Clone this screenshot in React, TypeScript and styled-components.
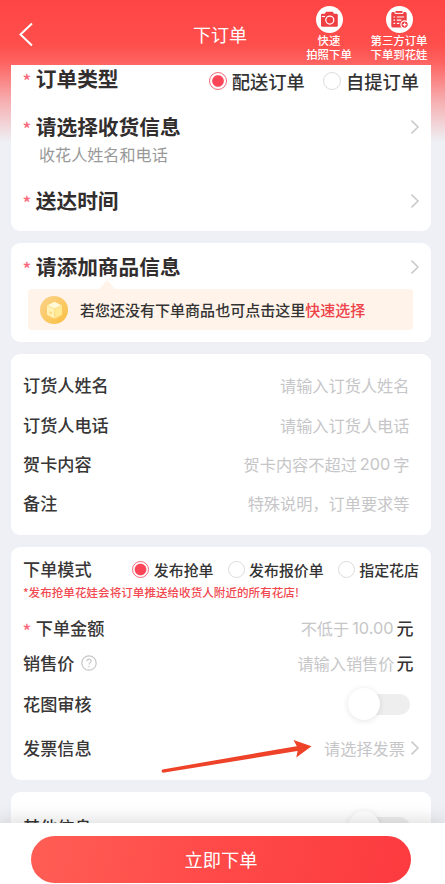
import React from "react";
import styled, { createGlobalStyle } from "styled-components";

const GlobalStyle = createGlobalStyle`
  * { box-sizing: border-box; }
  body {
    margin: 0;
    background: #eef0f5;
    font-family: "Noto Sans CJK SC", sans-serif;
    font-weight: 500;
    color: #333;
  }
`;

const Screen = styled.div`
  position: relative;
  width: 445px;
  height: 884px;
  display: flex;
  flex-direction: column;
  overflow: hidden;
  background: linear-gradient(180deg, #ff4545 0, #fe4f4c 45px, #fd6260 62px, #f6b0b2 102px, #eef0f5 142px);
`;

const Header = styled.header`
  height: 65px;
  flex: none;
  display: grid;
  grid-template-columns: 193px 109px 54px 86px;
  color: #fff;
`;

const BackButton = styled.button`
  border: 0;
  background: none;
  padding: 22px 0 0 18px;
  display: flex;
  align-items: flex-start;
`;

const Title = styled.h1`
  margin: 0;
  padding-top: 21px;
  font-size: 18px;
  font-weight: 400;
  line-height: 26px;
`;

const HeaderAction = styled.div`
  display: flex;
  flex-direction: column;
  align-items: center;
  padding-top: 6px;
  font-size: 11.4px;
  line-height: 14px;
  text-align: center;
  white-space: nowrap;
  svg { flex: none; }
`;

const Content = styled.main`
  flex: 1;
  min-height: 0;
  overflow: hidden;
  padding: 0 14px 0 11px;
  display: flex;
  flex-direction: column;
  gap: 12px;
`;

const Card = styled.section<{ $h: number; $top?: number; $flat?: boolean }>`
  height: ${(p) => p.$h}px;
  flex: none;
  background: #fff;
  border-radius: ${(p) => (p.$flat ? "0 0 9px 9px" : "9px")};
  padding: ${(p) => p.$top ?? 0}px 12px 0;
`;

const Row = styled.div<{ $h: number; $end?: number }>`
  height: ${(p) => p.$h}px;
  display: flex;
  align-items: center;
  justify-content: space-between;
  padding-right: ${(p) => p.$end ?? 0}px;
  white-space: nowrap;
`;

const Label = styled.div<{ $big?: boolean }>`
  display: flex;
  align-items: center;
  font-size: ${(p) => (p.$big ? 20.7 : 17.15)}px;
  font-weight: ${(p) => (p.$big ? 700 : 500)};
  line-height: 26px;
  color: ${(p) => (p.$big ? "#322e2e" : "#383636")};
  padding-bottom: ${(p) => (p.$big ? 2 : 0)}px;
`;

const Star = styled.span`
  width: 13.4px;
  margin-left: -0.6px;
  flex: none;
  font-weight: 500;
  font-size: 18px;
  line-height: 26px;
  color: #f7687a;
  padding-top: 3px;
  height: 28px;
`;

const Hint = styled.div`
  height: 24px;
  padding-left: 16px;
  font-size: 16.1px;
  font-weight: 400;
  line-height: 26px;
  color: #999;
`;

const Placeholder = styled.div`
  display: flex;
  align-items: center;
  font-size: 16.2px;
  font-weight: 400;
  line-height: 24px;
  color: #c6c6c8;
`;

const Digits = styled.span`
  font-family: Inter, sans-serif;
  font-size: 16.3px;
  margin: 0 3px;
`;

const Unit = styled.span<{ $space: number }>`
  font-size: 17px;
  font-weight: 500;
  color: #333;
  margin-left: ${(p) => p.$space}px;
`;

const Options = styled.div<{ $gap: number; $top: number }>`
  display: flex;
  align-items: center;
  gap: ${(p) => p.$gap}px;
  padding-top: ${(p) => p.$top}px;
`;

const Option = styled.label<{ $size: number; $space: number }>`
  display: flex;
  align-items: center;
  gap: ${(p) => p.$space}px;
  font-size: ${(p) => p.$size}px;
  line-height: 26px;
  color: #333;
`;

const Dot = styled.span<{ $on?: boolean; $d: number }>`
  width: ${(p) => p.$d}px;
  height: ${(p) => p.$d}px;
  flex: none;
  border-radius: 50%;
  border: 1.5px solid ${(p) => (p.$on ? "#f5697a" : "#dcdcde")};
  background: ${(p) => (p.$on ? "radial-gradient(circle, #fb4658 0 5.3px, #fff 6.3px)" : "#fff")};
`;

const Tip = styled.div`
  position: relative;
  width: 385px;
  height: 41px;
  margin: 8px 0 0 5px;
  padding-left: 12px;
  display: flex;
  align-items: center;
  gap: 12px;
  border-radius: 4px;
  background: #fff3ea;
  font-size: 15.02px;
  line-height: 22px;
  white-space: nowrap;
  &::before {
    content: "";
    position: absolute;
    left: 71px;
    top: -9px;
    border: 8px solid transparent;
    border-top: 0;
    border-bottom: 9px solid #fff3ea;
  }
`;

const Quick = styled.span`
  color: #ee4148;
`;

const Notice = styled.div`
  height: 18px;
  font-size: 11.58px;
  line-height: 18px;
  color: #f1494f;
  white-space: nowrap;
`;

const Track = styled.span`
  position: relative;
  width: 58px;
  height: 21px;
  border-radius: 11px;
  background: #eee;
  &::before {
    content: "";
    position: absolute;
    left: -4px;
    top: -6px;
    width: 32px;
    height: 32px;
    border-radius: 50%;
    background: #fff;
    box-shadow: 0 1px 6px rgba(0, 0, 0, 0.11);
  }
`;

const Footer = styled.footer`
  position: relative;
  height: 61px;
  flex: none;
  padding: 13px 34px 0 31px;
  background: #fff;
  box-shadow: 0 -2px 18px rgba(0, 0, 0, 0.15);
`;

const Submit = styled.button`
  display: block;
  width: 100%;
  height: 47px;
  border: 0;
  border-radius: 24px;
  background: linear-gradient(100deg, #ff5e55, #ff4b49 45%, #fc3a3f);
  color: #fff;
  font: 400 18.3px/47px "Noto Sans CJK SC", sans-serif;
  padding: 0;
`;

const ArrowOverlay = styled.svg`
  position: absolute;
  left: 155px;
  top: 735px;
  pointer-events: none;
`;

const ChevronIcon = styled.svg`
  flex: none;
  margin-right: -1px;
`;

const HelpIcon = styled.svg`
  margin-left: 7px;
`;

const InvoiceText = styled.span`
  margin-right: 5px;
`;

const Gap = styled.div<{ $h: number }>`
  height: ${(p) => p.$h}px;
`;

const Chevron = () => (
  <ChevronIcon width="10" height="16" viewBox="0 0 10 16" fill="none" stroke="#c9c9cb" strokeWidth="1.5">
    <path d="M1.5 1.6 8 8l-6.5 6.4" />
  </ChevronIcon>
);

const Camera = () => (
  <svg width="27" height="27" viewBox="0 0 27 27">
    <circle cx="13.5" cy="13.5" r="13.5" fill="#fff" />
    <path d="M6.2 7.8h2.6l1.3-2h6.6l1.3 2h2.6q1.2 0 1.2 1.2v10.6q0 1.2-1.2 1.2H6.2Q5 20.8 5 19.6V9q0-1.2 1.2-1.2Z" fill="#ee3f43" />
    <circle cx="13.8" cy="14.1" r="4" fill="none" stroke="#fff" strokeWidth="1.2" />
    <path d="M5.8 10.5H9" stroke="#fff" strokeWidth="1.1" />
  </svg>
);

const Clipboard = () => (
  <svg width="27" height="27" viewBox="0 0 27 27">
    <circle cx="13.5" cy="13.5" r="13.5" fill="#fff" />
    <rect x="5.3" y="6" width="15.4" height="15.5" rx="1.5" fill="#ee3f43" />
    <path d="M9 5v2.4h8V5" fill="#ee3f43" stroke="#fff" />
    <path d="M7.5 11h1.6M10.800 11h7.400M7.500 14.200h1.600M10.800 14.200h4.500M7.500 17.400h1.600M10.800 17.400h2.500" stroke="#fff" strokeWidth="1.2" />
    <circle cx="18.6" cy="18.6" r="3.7" fill="#ee3f43" stroke="#fff" strokeWidth="1.2" />
    <path d="M16.8 18.6h3.6M18.600 16.800v3.600" stroke="#fff" strokeWidth="1.2" />
  </svg>
);

const BoxIcon = () => (
  <svg width="28" height="28" viewBox="0 0 28 28">
    <defs>
      <linearGradient id="gold" x1="0" y1="0" x2="1" y2="1">
        <stop offset="0" stopColor="#fbd28a" />
        <stop offset=".6" stopColor="#fbc861" />
        <stop offset="1" stopColor="#f9bd3c" />
      </linearGradient>
    </defs>
    <circle cx="14" cy="14" r="14" fill="url(#gold)" />
    <path d="m14.5 5.8 7.5 3.6-7.5 3.5L7 9.4Z" fill="#fff9d6" />
    <path d="m7 9.4 7.5 3.5v9.8L7 18.8Z" fill="#fff2b4" />
    <path d="m22 9.4-7.5 3.5v9.8l7.5-3.9Z" fill="#ffe995" />
    <path d="m7 9.4 7.5 3.5L22 9.4M14.5 12.9v9.8" fill="none" stroke="#fbd77a" strokeWidth=".6" />
    <path d="m9.6 15.3 2 1v2l-2-1Z" fill="#fbd272" />
  </svg>
);

const Help = () => (
  <HelpIcon width="16" height="16" viewBox="0 0 16 16" fill="none" stroke="#c8c8ca" strokeWidth="1.2">
    <circle cx="8" cy="8" r="7.2" />
    <path d="M5.8 6.3C5.8 3.4 10.4 3.6 10.2 6.3 10 7.7 8 7.7 8 9.6M8 11v1.3" />
  </HelpIcon>
);

const BigRow = ({ text }: { text: string }) => (
  <Row $h={28}>
    <Label $big><Star>*</Star>{text}</Label>
    <Chevron />
  </Row>
);

const Field = ({ label, h, children }: { label: string; h: number; children: React.ReactNode }) => (
  <Row $h={h} $end={9.5}>
    <Label>{label}</Label>
    <Placeholder>{children}</Placeholder>
  </Row>
);

export default function App() {
  return (
    <Screen>
      <GlobalStyle />
      <Header>
        <BackButton aria-label="返回">
          <svg width="16" height="25" viewBox="0 0 16 25" fill="none" stroke="#fff" strokeWidth="2">
            <path d="M14 1.5 2.5 12.5 14 23.5" />
          </svg>
        </BackButton>
        <Title>下订单</Title>
        <HeaderAction><Camera /><div>快速<br />拍照下单</div></HeaderAction>
        <HeaderAction><Clipboard /><div>第三方订单<br />下单到花娃</div></HeaderAction>
      </Header>
      <Content>
        <Card $h={166} $flat>
          <Row $h={28}>
            <Label $big><Star>*</Star>订单类型</Label>
            <Options $gap={18} $top={4}>
              <Option $size={18.3} $space={5}><Dot $on $d={18} />配送订单</Option>
              <Option $size={18.3} $space={5}><Dot $d={18} />自提订单</Option>
            </Options>
          </Row>
          <Gap $h={20} />
          <BigRow text="请选择收货信息" />
          <Hint>收花人姓名和电话</Hint>
          <Gap $h={22} />
          <BigRow text="送达时间" />
        </Card>
        <Card $h={99} $top={10}>
          <BigRow text="请添加商品信息" />
          <Tip>
            <BoxIcon />
            <span>若您还没有下单商品也可点击这里<Quick>快速选择</Quick></span>
          </Tip>
        </Card>
        <Card $h={181} $top={11}>
          <Field label="订货人姓名" h={40}>请输入订货人姓名</Field>
          <Field label="订货人电话" h={39}>请输入订货人电话</Field>
          <Field label="贺卡内容" h={39}>贺卡内容不超过<Digits>200</Digits>字</Field>
          <Field label="备注" h={40}>特殊说明，订单要求等</Field>
        </Card>
        <Card $h={233} $top={8}>
          <Row $h={28}>
            <Label>下单模式</Label>
            <Options $gap={14} $top={1}>
              <Option $size={14.95} $space={4.5}><Dot $on $d={17} />发布抢单</Option>
              <Option $size={14.95} $space={4.5}><Dot $d={17} />发布报价单</Option>
              <Option $size={14.95} $space={4.5}><Dot $d={17} />指定花店</Option>
            </Options>
          </Row>
          <Notice>*发布抢单花娃会将订单推送给收货人附近的所有花店!</Notice>
          <Gap $h={9} />
          <Row $h={36} $end={5.5}>
            <Label><Star>*</Star>下单金额</Label>
            <Placeholder>不低于<Digits>10.00</Digits><Unit $space={0}>元</Unit></Placeholder>
          </Row>
          <Row $h={34} $end={5.5}>
            <Label>销售价<Help /></Label>
            <Placeholder>请输入销售价<Unit $space={2}>元</Unit></Placeholder>
          </Row>
          <Row $h={48} $end={9}>
            <Label>花图审核</Label>
            <Track />
          </Row>
          <Row $h={39}>
            <Label>发票信息</Label>
            <Placeholder><InvoiceText>请选择发票</InvoiceText><Chevron /></Placeholder>
          </Row>
        </Card>
        <Card $h={70} $top={12}>
          <Row $h={46} $end={9}>
            <Label>其他信息</Label>
            <Track />
          </Row>
        </Card>
      </Content>
      <Footer><Submit>立即下单</Submit></Footer>
      <ArrowOverlay width="162" height="42" viewBox="155 735 162 42">
        <path d="M162.5 769.4 298 746l.8 4.8L163 772.8q-2.600-1.400-.5-3.400Z" fill="#ee4229" />
        <path d="M311.5 746.2 293.5 740l4.6 8.8-1.8 8.7Z" fill="#ee4229" />
      </ArrowOverlay>
    </Screen>
  );
}
